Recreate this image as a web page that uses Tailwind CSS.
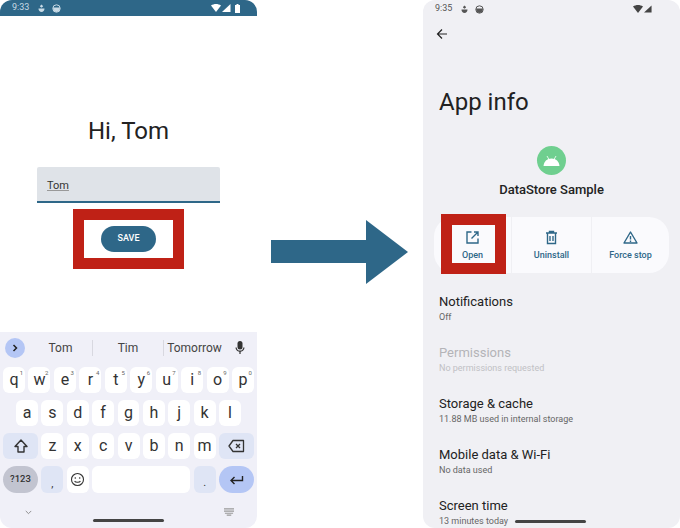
<!DOCTYPE html>
<html lang="en">
<head>
    <meta charset="UTF-8">
    <meta name="viewport" content="width=device-width, initial-scale=1.0">
    <title>DataStore Sample</title>
    <script src="https://cdn.jsdelivr.net/npm/@tailwindcss/browser@4"></script>
</head>
<body class="w-[680px] h-[528px] overflow-hidden bg-white font-['Roboto',sans-serif]">

    <div class="w-full h-full flex">
        <!-- left phone -->
        <div class="w-[257px] h-full flex flex-col shrink-0 overflow-hidden rounded-b-xl">
            <div class="h-[16px] shrink-0 bg-[#2e6788] rounded-t-xl flex items-center pl-[12px] pr-[17px] text-[#c9dbe6] text-[9px]">
                <span>9:33</span>
                <svg class="ml-[9px] w-[7px] h-[9px]" viewBox="0 0 7 9" fill="currentColor"><path d="M3.5 .5 5.2 2.2 3.5 3.7 1.8 2.2Z"/><path d="M.5 4.5H6.5C6.5 6.5 5.2 8 3.5 8S.5 6.5.5 4.5Z"/></svg>
                <svg class="ml-[7px] w-[9px] h-[9px]" viewBox="0 0 9 9" fill="none" stroke="currentColor"><circle cx="4.5" cy="4.5" r="3.7"/><path d="M1 3.6H8C8 6.2 6.5 8 4.5 8S1 6.2 1 3.6Z" fill="currentColor" stroke="none"/></svg>
                <svg class="ml-auto w-[10px] h-[8px]" viewBox="0 0 10 8" fill="white"><path d="M0 1.5C3 -.5 7 -.5 10 1.5L5 8Z"/></svg>
                <svg class="ml-[1px] w-[9px] h-[8px]" viewBox="0 0 9 8" fill="white"><path d="M8.5 0V8H0Z"/></svg>
                <svg class="ml-[4px] w-[5px] h-[9px]" viewBox="0 0 5 9" fill="white"><path d="M1.5 0H3.5V1H5V9H0V1H1.5Z"/></svg>
            </div>

            <div class="grow flex flex-col items-center bg-white">
                <h1 class="mt-[101px] text-[24px] leading-[28px] text-[#222]">Hi, Tom</h1>
                <div class="mt-[22px] w-[183px] h-[36px] bg-[#dfe3e8] border-b-2 border-[#2e6788] rounded-t-[2px] pl-[10px] pt-[12px] text-[11px] leading-[14px] text-[#333]">
                    <span class="underline decoration-[#999]">Tom</span>
                </div>
                <div class="mt-[6px] w-[111px] h-[60px] border-[11px] border-[#bf2116] flex items-center justify-center bg-white">
                    <button class="w-[55px] h-[26px] rounded-full bg-[#2e6788] text-white text-[9px] font-medium">SAVE</button>
                </div>
            </div>

            <!-- keyboard -->
            <div class="h-[196px] shrink-0 bg-[#f0f0f8] flex flex-col px-[3px] text-[#333]">
                <div class="h-[35px] shrink-0 flex items-center pb-[3px] text-[12px] text-[#444]">
                    <div class="w-[20px] h-[20px] ml-[2px] rounded-full bg-[#b4c6f5] flex items-center justify-center">
                        <svg class="w-[10px] h-[10px]" viewBox="0 0 10 10" fill="none" stroke="#222" stroke-width="1.5"><path d="M3.5 2 6.5 5 3.5 8"/></svg>
                    </div>
                    <div class="w-[67px] pl-[4px] text-center">Tom</div>
                    <div class="w-px h-[16px] bg-[#d8d8e0]"></div>
                    <div class="w-[70px] text-center">Tim</div>
                    <div class="w-px h-[16px] bg-[#d8d8e0]"></div>
                    <div class="w-[61px] text-center">Tomorrow</div>
                    <svg class="ml-[9px] w-[12px] h-[14px]" viewBox="0 0 12 14" fill="#333"><rect x="3.5" y="0" width="5" height="8.5" rx="2.5"/><path d="M1.5 6.5H2.7C2.7 8.5 4 9.6 6 9.6S9.3 8.5 9.3 6.5H10.5C10.5 8.8 9 10.4 6.6 10.7V13H5.4V10.7C3 10.4 1.5 8.8 1.5 6.5Z"/></svg>
                </div>

                <div class="flex gap-[3.4px] h-[26px] text-[16px]">
                    <div class="relative flex-1 bg-white rounded-md flex items-center justify-center">q<span class="absolute top-[1px] right-[2px] text-[6px] text-[#666]">1</span></div>
                    <div class="relative flex-1 bg-white rounded-md flex items-center justify-center">w<span class="absolute top-[1px] right-[2px] text-[6px] text-[#666]">2</span></div>
                    <div class="relative flex-1 bg-white rounded-md flex items-center justify-center">e<span class="absolute top-[1px] right-[2px] text-[6px] text-[#666]">3</span></div>
                    <div class="relative flex-1 bg-white rounded-md flex items-center justify-center">r<span class="absolute top-[1px] right-[2px] text-[6px] text-[#666]">4</span></div>
                    <div class="relative flex-1 bg-white rounded-md flex items-center justify-center">t<span class="absolute top-[1px] right-[2px] text-[6px] text-[#666]">5</span></div>
                    <div class="relative flex-1 bg-white rounded-md flex items-center justify-center">y<span class="absolute top-[1px] right-[2px] text-[6px] text-[#666]">6</span></div>
                    <div class="relative flex-1 bg-white rounded-md flex items-center justify-center">u<span class="absolute top-[1px] right-[2px] text-[6px] text-[#666]">7</span></div>
                    <div class="relative flex-1 bg-white rounded-md flex items-center justify-center">i<span class="absolute top-[1px] right-[2px] text-[6px] text-[#666]">8</span></div>
                    <div class="relative flex-1 bg-white rounded-md flex items-center justify-center">o<span class="absolute top-[1px] right-[2px] text-[6px] text-[#666]">9</span></div>
                    <div class="relative flex-1 bg-white rounded-md flex items-center justify-center">p<span class="absolute top-[1px] right-[2px] text-[6px] text-[#666]">0</span></div>
                </div>

                <div class="mt-[7px] flex gap-[3.4px] h-[26px] px-[13px] text-[16px]">
                    <div class="flex-1 bg-white rounded-md flex items-center justify-center">a</div>
                    <div class="flex-1 bg-white rounded-md flex items-center justify-center">s</div>
                    <div class="flex-1 bg-white rounded-md flex items-center justify-center">d</div>
                    <div class="flex-1 bg-white rounded-md flex items-center justify-center">f</div>
                    <div class="flex-1 bg-white rounded-md flex items-center justify-center">g</div>
                    <div class="flex-1 bg-white rounded-md flex items-center justify-center">h</div>
                    <div class="flex-1 bg-white rounded-md flex items-center justify-center">j</div>
                    <div class="flex-1 bg-white rounded-md flex items-center justify-center">k</div>
                    <div class="flex-1 bg-white rounded-md flex items-center justify-center">l</div>
                </div>

                <div class="mt-[7px] flex gap-[3.4px] h-[26px] text-[16px]">
                    <div class="w-[35px] shrink-0 bg-[#dfe5f5] rounded-md flex items-center justify-center">
                        <svg class="w-[16px] h-[16px]" viewBox="0 0 16 16" fill="none" stroke="#333" stroke-width="1.4"><path d="M8 2 14 8.5H11V14H5V8.5H2Z" stroke-linejoin="round"/></svg>
                    </div>
                    <div class="flex-1 bg-white rounded-md flex items-center justify-center">z</div>
                    <div class="flex-1 bg-white rounded-md flex items-center justify-center">x</div>
                    <div class="flex-1 bg-white rounded-md flex items-center justify-center">c</div>
                    <div class="flex-1 bg-white rounded-md flex items-center justify-center">v</div>
                    <div class="flex-1 bg-white rounded-md flex items-center justify-center">b</div>
                    <div class="flex-1 bg-white rounded-md flex items-center justify-center">n</div>
                    <div class="flex-1 bg-white rounded-md flex items-center justify-center">m</div>
                    <div class="w-[35px] shrink-0 bg-[#dfe5f5] rounded-md flex items-center justify-center">
                        <svg class="w-[17px] h-[14px]" viewBox="0 0 17 14" fill="none" stroke="#333" stroke-width="1.3"><path d="M5 1.5H15.5V12.5H5L1 7Z" stroke-linejoin="round"/><path d="M8 5 12 9M12 5 8 9"/></svg>
                    </div>
                </div>

                <div class="mt-[7px] flex gap-[3.4px] h-[27px] shrink-0">
                    <div class="w-[35px] shrink-0 bg-[#c2c4d0] rounded-full flex items-center justify-center text-[9.5px] font-medium">?123</div>
                    <div class="w-[22px] shrink-0 bg-[#dfe5f5] rounded-md flex items-end justify-center pb-[4px] text-[11px] leading-[11px]">,</div>
                    <div class="w-[22px] shrink-0 bg-white rounded-md flex items-center justify-center">
                        <svg class="w-[15px] h-[15px]" viewBox="0 0 15 15" fill="none" stroke="#333" stroke-width="1.1"><circle cx="7.5" cy="7.5" r="6"/><circle cx="5.3" cy="6" r=".8" fill="#333" stroke="none"/><circle cx="9.7" cy="6" r=".8" fill="#333" stroke="none"/><path d="M4.6 9C5.4 10.6 9.6 10.6 10.4 9"/></svg>
                    </div>
                    <div class="flex-1 bg-white rounded-md"></div>
                    <div class="w-[22px] shrink-0 bg-[#dfe5f5] rounded-md flex items-end justify-center pb-[5px] text-[11px] leading-[11px]">.</div>
                    <div class="w-[35px] shrink-0 bg-[#b4c6f5] rounded-full flex items-center justify-center">
                        <svg class="w-[15px] h-[12px]" viewBox="0 0 15 12" fill="none" stroke="#222" stroke-width="1.4"><path d="M13.5 2V6.5H2M5.5 3 2 6.5 5.5 10"/></svg>
                    </div>
                </div>

                <div class="mt-[15px] flex items-center justify-between pl-[22px] pr-[20px]">
                    <svg class="w-[7px] h-[5px]" viewBox="0 0 9 6" fill="none" stroke="#888" stroke-width="1.2"><path d="M1 1 4.5 4.5 8 1"/></svg>
                    <svg class="w-[10px] h-[8px]" viewBox="0 0 11 8" fill="#999"><path d="M0 0H11V1.2H0ZM0 2.4H11V3.6H0ZM1 4.8H10V6H1ZM3 6.8H8V8H3Z"/></svg>
                </div>
                <div class="mt-[3px] mx-auto w-[71px] h-[3px] rounded-full bg-[#444]"></div>
            </div>
        </div>

        <!-- arrow -->
        <svg class="ml-[14px] mt-[220px] w-[137px] h-[64px] shrink-0" viewBox="0 0 137 64" fill="#2e6788"><path d="M0 20H95V0L137 32 95 64V43H0Z"/></svg>

        <!-- right phone -->
        <div class="ml-[15px] w-[257px] h-full shrink-0 bg-[#f0f0f4] rounded-xl flex flex-col overflow-hidden text-[#222]">
            <div class="h-[16px] mt-[1px] shrink-0 flex items-center pl-[12px] pr-[28px] text-[#555] text-[9px]">
                <span>9:35</span>
                <svg class="ml-[9px] w-[7px] h-[9px]" viewBox="0 0 7 9" fill="currentColor"><path d="M3.5 .5 5.2 2.2 3.5 3.7 1.8 2.2Z"/><path d="M.5 4.5H6.5C6.5 6.5 5.2 8 3.5 8S.5 6.5.5 4.5Z"/></svg>
                <svg class="ml-[7px] w-[9px] h-[9px]" viewBox="0 0 9 9" fill="none" stroke="currentColor"><circle cx="4.5" cy="4.5" r="3.7"/><path d="M1 3.6H8C8 6.2 6.5 8 4.5 8S1 6.2 1 3.6Z" fill="currentColor" stroke="none"/></svg>
                <svg class="ml-auto w-[10px] h-[8px]" viewBox="0 0 10 8" fill="#444"><path d="M0 1.5C3 -.5 7 -.5 10 1.5L5 8Z"/></svg>
                <svg class="ml-[1px] w-[8px] h-[8px]" viewBox="0 0 9 8" fill="#444"><path d="M8.5 0V8H0Z"/></svg>
            </div>

            <svg class="ml-[13px] mt-[11px] w-[12px] h-[12px] shrink-0" viewBox="0 0 12 12" fill="none" stroke="#222" stroke-width="1.2"><path d="M11 6H1.5M6 1.5 1.5 6 6 10.5"/></svg>

            <h1 class="ml-[16px] mt-[48px] text-[24px] leading-[28px] text-[#222]">App info</h1>

            <div class="mt-[30px] mx-auto w-[29px] h-[29px] rounded-full bg-[#6fcf8f] flex items-center justify-center shrink-0">
                <svg class="w-[19px] h-[12px]" viewBox="0 0 19 12" fill="white"><path d="M1.5 11C1.8 6.5 5 3.5 9.5 3.5S17.2 6.5 17.5 11Z"/><path d="M5 1 7 4.5M14 1 12 4.5" stroke="white" stroke-width=".8"/></svg>
            </div>
            <div class="mt-[6px] text-center text-[13px] leading-[18px] font-medium text-[#222]">DataStore Sample</div>

            <!-- action buttons -->
            <div class="relative mt-[18px] ml-[11px] w-[235px] h-[56px] shrink-0 bg-[#fafafd] rounded-[20px] flex text-[#2e6788] text-[9px] font-medium">
                <div class="w-[77px] flex flex-col items-center pt-[13px] gap-[4px]">
                    <svg class="w-[15px] h-[15px]" viewBox="0 0 15 15" fill="none" stroke="#2e6788" stroke-width="1.4"><path d="M6.5 2H2V13H13V8.5M9 2H13V6M13 2 6.5 8.5"/></svg>
                    <span>Open</span>
                </div>
                <div class="w-px bg-[#f0f0f4]"></div>
                <div class="w-[79px] flex flex-col items-center pt-[13px] gap-[4px]">
                    <svg class="w-[15px] h-[15px]" viewBox="0 0 15 15" fill="none" stroke="#2e6788" stroke-width="1.4"><path d="M2 3H13M5.5 3V1.5H9.5V3M3.5 3V13.5H11.5V3M6 6V11M9 6V11"/></svg>
                    <span>Uninstall</span>
                </div>
                <div class="w-px bg-[#f0f0f4]"></div>
                <div class="flex-1 flex flex-col items-center pt-[13px] gap-[4px]">
                    <svg class="w-[15px] h-[15px]" viewBox="0 0 15 15" fill="none" stroke="#2e6788" stroke-width="1.4"><path d="M7.5 2 14 13H1Z" stroke-linejoin="round"/><path d="M7.5 6V9.5M7.5 10.5V12"/></svg>
                    <span>Force stop</span>
                </div>
                <!-- highlight over Open -->
                <div class="absolute left-[7px] top-[-3px] w-[65px] h-[60px] border-[11px] border-[#bf2116]"></div>
            </div>

            <div class="ml-[16px] mt-[21px] flex flex-col gap-[21px]">
                <div>
                    <div class="text-[13px] leading-[16px]">Notifications</div>
                    <div class="text-[9px] leading-[14px] text-[#666]">Off</div>
                </div>
                <div>
                    <div class="text-[13px] leading-[16px] text-[#b4b4b8]">Permissions</div>
                    <div class="text-[9px] leading-[14px] text-[#c0c0c4]">No permissions requested</div>
                </div>
                <div>
                    <div class="text-[13px] leading-[16px]">Storage &amp; cache</div>
                    <div class="text-[9px] leading-[14px] text-[#666]">11.88 MB used in internal storage</div>
                </div>
                <div>
                    <div class="text-[13px] leading-[16px]">Mobile data &amp; Wi-Fi</div>
                    <div class="text-[9px] leading-[14px] text-[#666]">No data used</div>
                </div>
                <div>
                    <div class="text-[13px] leading-[16px]">Screen time</div>
                    <div class="flex items-center text-[9px] leading-[14px] text-[#666]">
                        <span>13 minutes today</span>
                        <div class="ml-[7px] w-[71px] h-[3px] rounded-full bg-[#444]"></div>
                    </div>
                </div>
            </div>
        </div>
    </div>
</body>
</html>
